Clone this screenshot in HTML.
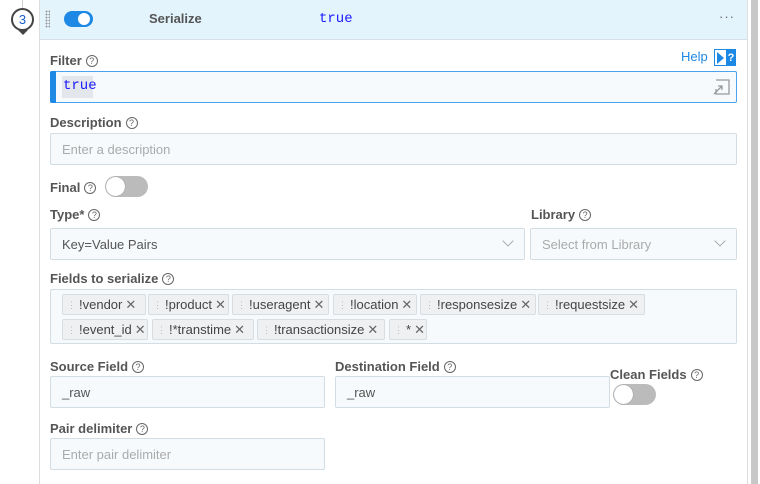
<!DOCTYPE html>
<html><head><style>
*{box-sizing:border-box;margin:0;padding:0}
body{width:760px;height:484px;overflow:hidden;background:#fff;font-family:"Liberation Sans",sans-serif;font-size:13px;color:#555;position:relative}
.a{position:absolute}
.lbl{position:absolute;font-weight:bold;color:#555;font-size:13px;white-space:nowrap}
.q{display:inline-block;width:12px;height:12px;border:1px solid #666;border-radius:50%;font-size:9px;line-height:10px;text-align:center;font-weight:normal;margin-left:4px;vertical-align:1px;color:#666}
.in{position:absolute;border:1px solid #d3dde4;background:#f7fafc;border-radius:2px;padding-left:11px;font-size:13px;color:#555;display:flex;align-items:center}
.ph{color:#aaa}
.tag{position:absolute;height:21px;background:#eef0f2;border:1px solid #d8dde2;border-radius:2px;font-size:13px;color:#444;line-height:19px;padding-left:4px;white-space:nowrap}
.tag i{font-style:normal;color:#bbb;font-size:9px;margin-right:3px;vertical-align:1px}
.tag b{font-weight:normal;color:#666;margin-left:3px}
.tog{position:absolute;width:43px;height:21px;border-radius:11px;background:#bbb}
.tog::after{content:"";position:absolute;left:1px;top:1px;width:19px;height:19px;border-radius:50%;background:#fff;box-shadow:0 0 1px rgba(0,0,0,.4)}
.chev{position:absolute;width:8px;height:8px;border-right:1px solid #aaa;border-bottom:1px solid #aaa;transform:rotate(45deg)}
</style></head><body>
<div class="a" style="left:22px;top:0;width:1px;height:8px;background:#ccc"></div>
<div class="a" style="left:11px;top:8px;width:23px;height:23px;border:2px solid #444;border-radius:50%;background:#fff;color:#1a5fc8;text-align:center;line-height:19px;font-size:13px">3</div>
<div class="a" style="left:18px;top:30px;width:0;height:0;border-left:5px solid transparent;border-right:5px solid transparent;border-top:5px solid #444"></div>
<div class="a" style="left:39px;top:0;width:1px;height:484px;background:#ddd"></div>
<div class="a" style="left:747px;top:0;width:1px;height:484px;background:#ddd"></div>
<div class="a" style="left:751px;top:0;width:7px;height:484px;background:#c8c8c8"></div>
<div class="a" style="left:40px;top:0;width:707px;height:40px;background:#e3f4fd;border-bottom:1px solid #d5dfe5"></div>
<div class="a" style="left:45px;top:10px;width:5px;height:18px;background-image:radial-gradient(circle,#999 0.8px,transparent 1px);background-size:3px 3px"></div>
<div class="a" style="left:64px;top:11px;width:29px;height:16px;border-radius:8px;background:#1e88e5"></div>
<div class="a" style="left:78px;top:13px;width:12px;height:12px;border-radius:50%;background:#fff"></div>
<div class="a" style="left:149px;top:11px;font-weight:bold;color:#555">Serialize</div>
<div class="a" style="left:319px;top:11px;font-family:'Liberation Mono',monospace;color:#1a1aff;font-size:14px">true</div>
<div class="a" style="left:719px;top:9px;color:#666;letter-spacing:1px">···</div>

<div class="lbl" style="left:50px;top:53px">Filter<span class="q">?</span></div>
<div class="a" style="left:681px;top:49px;color:#1e88e5;font-size:13px">Help</div>
<div class="a" style="left:714px;top:49px;width:22px;height:17px;border:1px solid #1e88e5;background:#fff"></div>
<div class="a" style="left:717px;top:52px;width:0;height:0;border-top:6px solid transparent;border-bottom:6px solid transparent;border-left:7px solid #1e88e5"></div>
<div class="a" style="left:726px;top:50px;width:10px;height:16px;background:#1e88e5;color:#fff;font-weight:bold;font-size:11px;text-align:center;line-height:16px">?</div>
<div class="a" style="left:50px;top:71px;width:687px;height:32px;border:1px solid #4aa3ee;background:#f7fafc;border-radius:2px"></div>
<div class="a" style="left:50px;top:71px;width:6px;height:32px;background:#1e88e5;border-radius:2px 0 0 2px"></div>
<div class="a" style="left:62px;top:76px;width:31px;height:22px;background:#e3e6ea"></div>
<div class="a" style="left:63px;top:78px;font-family:'Liberation Mono',monospace;color:#1a1aff;font-size:14px">true</div>
<svg class="a" style="left:713px;top:79px" width="18" height="17"><path d="M3 1H16V15H3V10" fill="none" stroke="#999" stroke-width="1.3"/><path d="M1 15L9 7M5 7H9V11" fill="none" stroke="#999" stroke-width="1.3"/></svg>

<div class="lbl" style="left:50px;top:115px">Description<span class="q">?</span></div>
<div class="in" style="left:50px;top:133px;width:687px;height:32px"><span class="ph">Enter a description</span></div>

<div class="lbl" style="left:50px;top:180px">Final<span class="q">?</span></div>
<div class="tog" style="left:105px;top:176px"></div>

<div class="lbl" style="left:50px;top:207px">Type*<span class="q">?</span></div>
<div class="in" style="left:50px;top:228px;width:475px;height:32px">Key=Value Pairs</div>
<div class="chev" style="left:504px;top:237px"></div>
<div class="lbl" style="left:531px;top:207px">Library<span class="q">?</span></div>
<div class="in" style="left:530px;top:228px;width:207px;height:32px"><span class="ph">Select from Library</span></div>
<div class="chev" style="left:716px;top:237px"></div>

<div class="lbl" style="left:50px;top:271px">Fields to serialize<span class="q">?</span></div>
<div class="a" style="left:50px;top:289px;width:687px;height:55px;border:1px solid #d3dde4;background:#f7fafc;border-radius:2px"></div>
<div class="tag" style="left:62px;top:294px;width:84px"><i>⋮</i>!vendor<b>✕</b></div>
<div class="tag" style="left:148px;top:294px;width:81px"><i>⋮</i>!product<b>✕</b></div>
<div class="tag" style="left:232px;top:294px;width:97px"><i>⋮</i>!useragent<b>✕</b></div>
<div class="tag" style="left:333px;top:294px;width:84px"><i>⋮</i>!location<b>✕</b></div>
<div class="tag" style="left:420px;top:294px;width:116px"><i>⋮</i>!responsesize<b>✕</b></div>
<div class="tag" style="left:538px;top:294px;width:107px"><i>⋮</i>!requestsize<b>✕</b></div>
<div class="tag" style="left:62px;top:319px;width:86px"><i>⋮</i>!event_id<b>✕</b></div>
<div class="tag" style="left:152px;top:319px;width:102px"><i>⋮</i>!*transtime<b>✕</b></div>
<div class="tag" style="left:257px;top:319px;width:128px"><i>⋮</i>!transactionsize<b>✕</b></div>
<div class="tag" style="left:389px;top:319px;width:38px"><i>⋮</i>*<b>✕</b></div>

<div class="lbl" style="left:50px;top:359px">Source Field<span class="q">?</span></div>
<div class="in" style="left:50px;top:376px;width:275px;height:32px">_raw</div>
<div class="lbl" style="left:335px;top:359px">Destination Field<span class="q">?</span></div>
<div class="in" style="left:335px;top:376px;width:275px;height:32px">_raw</div>
<div class="lbl" style="left:610px;top:367px">Clean Fields<span class="q">?</span></div>
<div class="tog" style="left:613px;top:384px"></div>

<div class="lbl" style="left:50px;top:421px">Pair delimiter<span class="q">?</span></div>
<div class="in" style="left:50px;top:438px;width:275px;height:32px"><span class="ph">Enter pair delimiter</span></div>
</body></html>
